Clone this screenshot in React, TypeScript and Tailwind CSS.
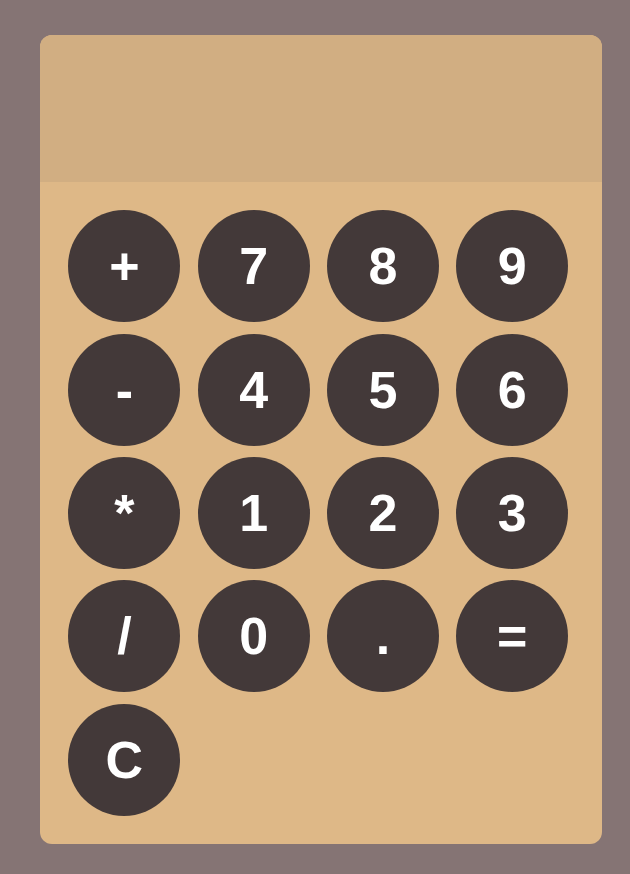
import React from "react";

const keys = ["+", "7", "8", "9", "-", "4", "5", "6", "*", "1", "2", "3", "/", "0", ".", "=", "C"];

export default function App() {
  return (
    <div
      className="min-h-screen w-full bg-[#857474] pt-[35px] pl-[40px]"
      style={{ fontFamily: '"Liberation Sans", Arial, sans-serif' }}
    >
      <div className="w-[562px] h-[809px] rounded-xl overflow-hidden bg-[#deb887] flex flex-col">
        <div className="h-[147px] bg-[#d1ae82]" />
        <div className="grid grid-cols-[repeat(4,112px)] gap-x-[17.3px] gap-y-[11.3px] pl-[28.4px] pt-[28.4px]">
          {keys.map((k) => (
            <button
              key={k}
              className="w-[112px] h-[112px] rounded-full bg-[#433939] text-white font-bold text-[52px] flex items-center justify-center leading-none"
            >
              {k}
            </button>
          ))}
        </div>
      </div>
    </div>
  );
}
